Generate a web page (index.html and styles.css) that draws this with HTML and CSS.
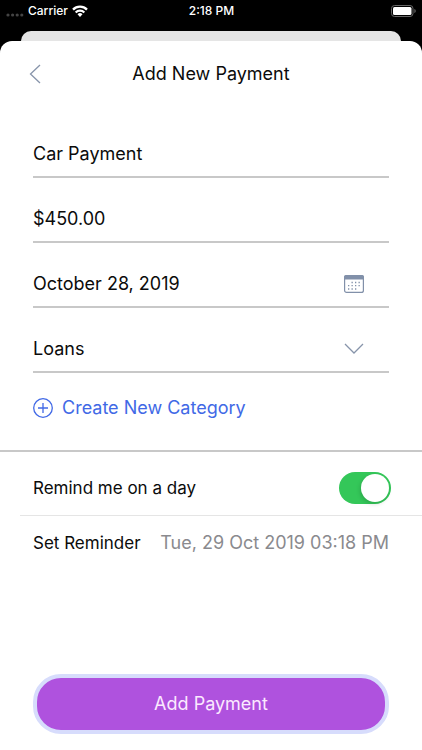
FILE: index.html
```html
<!DOCTYPE html>
<html lang="en">
<head>
<meta charset="utf-8">
<meta name="viewport" content="width=device-width, initial-scale=1">
<title>Add New Payment</title>
<link rel="stylesheet" href="styles.css">
</head>
<body>
<div class="status">
  <div class="status-left">
    <svg class="signal" width="18" height="4" viewBox="0 0 18 4" aria-hidden="true">
      <circle cx="2" cy="2" r="1.6"/><circle cx="6.6" cy="2" r="1.6"/><circle cx="11.2" cy="2" r="1.6"/><circle cx="15.8" cy="2" r="1.6"/>
    </svg>
    <span>Carrier</span>
    <svg width="16" height="12" viewBox="0 0 16 12" fill="none" stroke="#fff" stroke-width="2.3" aria-hidden="true">
      <path d="M1 4.600a9.900 9.900 0 0 1 14 0"/>
      <path d="M3.700 7.500a6 6 0 0 1 8.600 0"/>
      <path d="M8 12 5.500 9.300a3.500 3.500 0 0 1 5 0Z" fill="#fff" stroke="none"/>
    </svg>
  </div>
  <span class="clock">2:18 PM</span>
  <div class="status-right">
    <svg width="26" height="12" viewBox="0 0 26 12" aria-hidden="true">
      <rect x=".5" y=".5" width="21.5" height="11" rx="3" fill="none" stroke="#666"/>
      <rect x="2" y="2" width="18.5" height="8" rx="1.5" fill="#fff"/>
      <path d="M23.4 4v4c.8-.3 1.3-1.100 1.300-2s-.5-1.700-1.300-2Z" fill="#666"/>
    </svg>
  </div>
</div>
<div class="backdrop"></div>
<main class="sheet">
  <header class="nav">
    <button class="icon-button" type="button" aria-label="Back">
      <svg width="12" height="20" viewBox="0 0 12 20" fill="none" stroke="#8794aa" stroke-width="1.3"><path d="M11 1 1.500 10 11 19"/></svg>
    </button>
    <h1 class="title">Add New Payment</h1>
  </header>
  <form class="form">
    <div class="fields">
      <div class="field"><input class="control" type="text" aria-label="Payment name" value="Car Payment"></div>
      <div class="field"><input class="control" type="text" aria-label="Amount" value="$450.00"></div>
      <div class="field">
        <input class="control" type="text" aria-label="Payment date" value="October 28, 2019">
        <button class="icon-button" type="button" aria-label="Choose date">
          <svg width="20" height="20" viewBox="0 0 20 20">
            <rect x=".6" y="1.600" width="18.800" height="16.800" rx="2" fill="#fff" stroke="#8190a9" stroke-width="1.200"/>
            <path d="M0 5.500V3a2 2 0 0 1 2-2h16a2 2 0 0 1 2 2v2.500Z" fill="#8190a9"/>
            <path d="M7.500 8.500h9M4 11.700h12.500M4 15h9" stroke="#8190a9" stroke-width="1.300" stroke-dasharray="1.300 2.200"/>
          </svg>
        </button>
      </div>
      <div class="field">
        <select class="control" aria-label="Category"><option>Loans</option></select>
        <svg class="chevron" width="20" height="12" viewBox="0 0 20 12" fill="none" stroke="#8794aa" stroke-width="1.300" aria-hidden="true"><path d="m1 1 9 9 9-9"/></svg>
      </div>
      <button class="create" type="button">
        <svg width="20" height="20" viewBox="0 0 20 20" fill="none" stroke="#4169e6" stroke-width="1.300" aria-hidden="true"><circle cx="10" cy="10" r="9.300"/><path d="M10 5v10M5 10h10"/></svg>
        <span>Create New Category</span>
      </button>
    </div>
    <div class="reminders">
      <div class="row row-toggle">
        <label for="remind">Remind me on a day</label>
        <input class="switch" id="remind" type="checkbox" role="switch" checked>
      </div>
      <div class="row">
        <label for="when">Set Reminder</label>
        <input class="when" id="when" type="text" value="Tue, 29 Oct 2019 03:18 PM">
      </div>
    </div>
    <div class="footer"><button class="submit" type="button">Add Payment</button></div>
  </form>
</main>
</body>
</html>
```
FILE: styles.css
```css
* {
  box-sizing: border-box;
}

body {
  margin: 0;
  min-height: 100vh;
  display: flex;
  flex-direction: column;
  background: #000;
  color: #0b0b0b;
  font-family: Inter, "Liberation Sans", sans-serif;
  font-size: 18px;
  line-height: 24px;
}

button,
input,
select {
  margin: 0;
  padding: 0;
  border: 0;
  background: none;
  color: inherit;
  font: inherit;
}

svg {
  display: block;
  flex: none;
}

.status {
  display: grid;
  grid-template-columns: 1fr auto 1fr;
  align-items: center;
  height: 21px;
  margin-bottom: 10px;
  padding: 0 5px 0 6px;
  color: #fff;
  font-size: 12px;
  font-weight: 500;
  line-height: 20px;
}

.status-left {
  display: flex;
  align-items: center;
  gap: 4px;
}

.signal {
  align-self: flex-end;
  margin-bottom: 4px;
  fill: #444;
}

.status-right {
  justify-self: end;
}

.backdrop {
  height: 10px;
  margin: 0 21px;
  border-radius: 10px 10px 0 0;
  background: #e5e5e5;
}

.sheet {
  flex: 1;
  display: flex;
  flex-direction: column;
  border-radius: 12px 12px 0 0;
  background: #fff;
}

.nav {
  display: grid;
  grid-template-columns: 1fr auto 1fr;
  align-items: center;
  height: 66px;
  padding: 0 29px;
}

.title {
  margin: 0;
  font-size: 18px;
  font-weight: 400;
}

.icon-button {
  justify-self: start;
  cursor: pointer;
}

.form {
  flex: 1;
  display: flex;
  flex-direction: column;
}

.fields {
  padding: 6px 33px 30px;
}

.field {
  display: flex;
  align-items: center;
  height: 65px;
  padding: 29px 25px 10px 0;
  border-bottom: 2px solid #c8c8c8;
}

.control {
  flex: 1;
  min-width: 0;
  height: 24px;
  appearance: none;
  outline: none;
}

.chevron {
  margin-left: -20px;
  pointer-events: none;
}

.create {
  display: flex;
  align-items: center;
  gap: 9px;
  margin-top: 23px;
  color: #4169e6;
  cursor: pointer;
}

.reminders {
  border-top: 2px solid #c8c8c8;
}

.row {
  display: flex;
  align-items: center;
  gap: 12px;
  height: 54px;
  margin-left: 20px;
  padding: 0 33px 0 13px;
}

.row-toggle {
  height: 64px;
  padding: 9px 31px 0 13px;
  border-bottom: 1px solid #e5e5e5;
}

.row label {
  flex: none;
  font-size: 17px;
}

.when {
  flex: 1;
  min-width: 0;
  color: #8a8a8e;
  text-align: right;
  outline: none;
}

.switch {
  flex: none;
  width: 52px;
  height: 32px;
  margin-left: auto;
  padding: 2px;
  border-radius: 16px;
  appearance: none;
  background: #b9b9bd;
}

.switch::before {
  content: "";
  display: block;
  width: 28px;
  height: 28px;
  border-radius: 50%;
  background: #fff;
}

.switch:checked {
  background: #34c759;
}

.switch:checked::before {
  margin-left: auto;
  box-shadow: -1px 2px 4px rgba(0, 0, 0, 0.15);
}

.footer {
  margin-top: auto;
  padding: 16px 33px;
}

.submit {
  display: block;
  width: 100%;
  height: 60px;
  border: 4px solid #d7dcfc;
  border-radius: 28px;
  background: #af52de;
  color: #fbe9ff;
  cursor: pointer;
}
```
